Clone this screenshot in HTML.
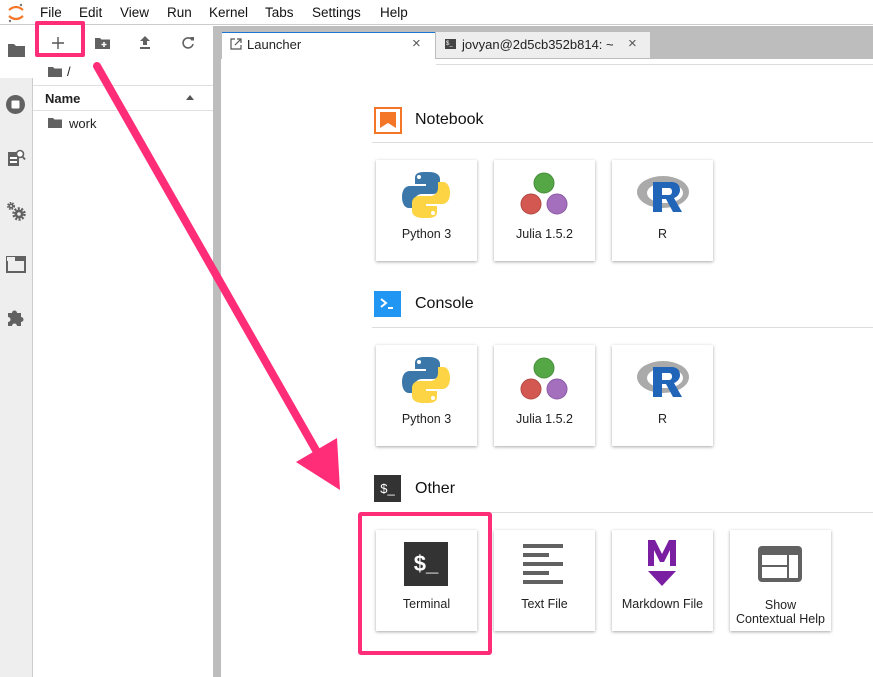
<!DOCTYPE html>
<html><head><meta charset="utf-8">
<style>
*{margin:0;padding:0;box-sizing:border-box}
body{width:873px;height:677px;overflow:hidden;background:#fff;font-family:"Liberation Sans",Arial,sans-serif;color:#222;position:relative}
.a{position:absolute}
.menu span{position:absolute;top:5px;font-size:13.5px;color:#111}
.card{position:absolute;width:101px;height:101px;background:#fff;box-shadow:0 1px 3px rgba(0,0,0,.35);}
.card .lbl{position:absolute;left:-5px;right:-5px;text-align:center;font-size:12.5px;color:#222;top:67px;line-height:14px}
.hdr{position:absolute;left:415px;font-size:16px;color:#111}
.line{position:absolute;left:372px;right:0;height:1px;background:#ddd}
</style></head><body>
<div class="a" style="left:0;top:0;width:873px;height:25px;background:#fff;border-bottom:1px solid #ccc"></div>
<svg class="a" style="left:6px;top:2px" width="20" height="22" viewBox="0 0 20 22"><path d="M3 8 Q10 2 17 8" stroke="#f37726" stroke-width="2.2" fill="none"/><path d="M3 14 Q10 20 17 14" stroke="#f37726" stroke-width="2.2" fill="none"/><circle cx="15" cy="3" r="1.2" fill="#767677"/><circle cx="4" cy="19" r="1.2" fill="#767677"/></svg>
<div class="menu"><span style="left:40px">File</span><span style="left:79px">Edit</span><span style="left:120px">View</span><span style="left:167px">Run</span><span style="left:209px">Kernel</span><span style="left:265px">Tabs</span><span style="left:312px">Settings</span><span style="left:380px">Help</span></div>
<div class="a" style="left:0;top:26px;width:33px;height:651px;background:#eee;border-right:1px solid #ccc"></div>
<div class="a" style="left:0;top:26px;width:33px;height:52px;background:#fff"></div>
<svg class="a" style="left:7px;top:42px" width="19" height="16" viewBox="0 0 19 16"><path d="M1 2h6l2 2h9v11H1z" fill="#616161"/></svg>
<svg class="a" style="left:5px;top:94px" width="21" height="21" viewBox="0 0 21 21"><circle cx="10.5" cy="10.5" r="9.5" fill="#616161"/><rect x="6.5" y="6.5" width="8" height="8" rx="1" fill="#fff"/></svg>
<svg class="a" style="left:6px;top:148px" width="20" height="20" viewBox="0 0 20 20"><rect x="2" y="4" width="11" height="14" fill="#616161"/><rect x="4" y="9" width="7" height="2" fill="#fff"/><rect x="4" y="13" width="7" height="2" fill="#fff"/><circle cx="14" cy="6" r="3.5" stroke="#616161" stroke-width="1.6" fill="#fff"/><path d="M16.5 8.5l2.5 3" stroke="#616161" stroke-width="1.8"/></svg>
<svg class="a" style="left:6px;top:201px" width="21" height="21" viewBox="0 0 21 21"><circle cx="5" cy="5" r="3" fill="none" stroke="#616161" stroke-width="2" stroke-dasharray="1.5 1"/><circle cx="5" cy="5" r="2.5" fill="#616161"/><circle cx="5" cy="5" r="1" fill="#eee"/><circle cx="13" cy="13" r="5.5" fill="none" stroke="#616161" stroke-width="2.5" stroke-dasharray="2 1.5"/><circle cx="13" cy="13" r="4.5" fill="#616161"/><circle cx="13" cy="13" r="1.8" fill="#eee"/></svg>
<svg class="a" style="left:6px;top:256px" width="20" height="17" viewBox="0 0 20 17"><rect x="1" y="1" width="18" height="15" fill="none" stroke="#616161" stroke-width="2"/><rect x="1" y="1" width="18" height="4" fill="#616161"/><rect x="1" y="1" width="8" height="4" fill="#eee"/></svg>
<svg class="a" style="left:6px;top:307px" width="20" height="20" viewBox="0 0 20 20"><path d="M2 6h4a2.5 2.5 0 1 1 5 0h4v4a2.5 2.5 0 1 1 0 5v4H11a2.5 2.5 0 1 0-5 0H2v-4a2.5 2.5 0 1 0 0-5z" fill="#616161"/></svg>
<div class="a" style="left:33px;top:26px;width:180px;height:651px;background:#fff"></div>
<svg class="a" style="left:52px;top:37px" width="12" height="12" viewBox="0 0 12 12"><path d="M6 0v12M0 6h12" stroke="#555" stroke-width="1.4"/></svg>
<svg class="a" style="left:95px;top:37px" width="15" height="12" viewBox="0 0 15 12"><path d="M0 1h5l1.5 1.5H15V12H0z" fill="#616161"/><path d="M9 5v5M6.5 7.5h5" stroke="#fff" stroke-width="1.5"/></svg>
<svg class="a" style="left:139px;top:36px" width="12" height="13" viewBox="0 0 12 13"><path d="M6 0L11 5H8v4H4V5H1z" fill="#616161"/><rect x="1" y="11" width="10" height="2" fill="#616161"/></svg>
<svg class="a" style="left:181px;top:36px" width="14" height="14" viewBox="0 0 14 14"><path d="M11.5 4.5A5 5 0 1 0 12 8" stroke="#616161" stroke-width="1.6" fill="none"/><path d="M9 1h4v4z" fill="#616161"/></svg>
<svg class="a" style="left:48px;top:66px" width="14" height="11" viewBox="0 0 14 11"><path d="M0 1h5l1.5 1.5H14V11H0z" fill="#616161"/></svg>
<div class="a" style="left:67px;top:64px;font-size:13px">/</div>
<div class="a" style="left:33px;top:85px;width:180px;height:1px;background:#e0e0e0"></div>
<div class="a" style="left:45px;top:91px;font-size:13px;font-weight:bold">Name</div>
<div class="a" style="left:186px;top:95px;width:0;height:0;border-left:4.5px solid transparent;border-right:4.5px solid transparent;border-bottom:5px solid #555"></div>
<div class="a" style="left:33px;top:110px;width:180px;height:1px;background:#e0e0e0"></div>
<svg class="a" style="left:48px;top:117px" width="14" height="11" viewBox="0 0 14 11"><path d="M0 1h5l1.5 1.5H14V11H0z" fill="#616161"/></svg>
<div class="a" style="left:69px;top:116px;font-size:13px">work</div>
<div class="a" style="left:213px;top:26px;width:8px;height:651px;background:#bdbdbd"></div>
<div class="a" style="left:221px;top:26px;width:652px;height:33px;background:#bdbdbd"></div>
<div class="a" style="left:222px;top:32px;width:213px;height:29px;background:#fff;border-top:1px solid #1976d2"></div>
<svg class="a" style="left:230px;top:38px" width="12" height="12" viewBox="0 0 12 12"><path d="M5 1H1v10h10V7" stroke="#555" stroke-width="1.2" fill="none"/><path d="M7 1h4v4M11 1L5 7" stroke="#555" stroke-width="1.2" fill="none"/></svg>
<div class="a" style="left:247px;top:37px;font-size:13px">Launcher</div>
<div class="a" style="left:412px;top:35px;font-size:15px;color:#555">×</div>
<div class="a" style="left:436px;top:32px;width:214px;height:26px;background:#eee"></div>
<div class="a" style="left:445px;top:39px;width:11px;height:10px;background:#444;color:#fff;font-size:6px;line-height:10px;padding-left:1px">$_</div>
<div class="a" style="left:462px;top:37px;font-size:13px">jovyan@2d5cb352b814: ~</div>
<div class="a" style="left:628px;top:35px;font-size:15px;color:#555">×</div>
<div class="a" style="left:436px;top:64px;width:437px;height:1px;background:#ddd"></div>
<svg class="a" style="left:374px;top:107px" width="28" height="27" viewBox="0 0 28 27"><rect x="1" y="1" width="26" height="25" fill="none" stroke="#f37726" stroke-width="2"/><path d="M6 5h16v16l-8-5-8 5z" fill="#f37726"/></svg>
<div class="hdr" style="top:111px">Notebook</div>
<div class="line" style="top:142px"></div>
<svg class="a" style="left:374px;top:291px" width="27" height="26" viewBox="0 0 27 26"><rect width="27" height="26" fill="#2196f3"/><path d="M7 8l5 4-5 4" stroke="#fff" stroke-width="2" fill="none"/><path d="M14 17h5" stroke="#fff" stroke-width="2"/></svg>
<div class="hdr" style="top:295px">Console</div>
<div class="line" style="top:327px"></div>
<div class="a" style="left:374px;top:475px;width:27px;height:27px;background:#333;color:#fff;font-size:13px;line-height:27px;text-align:center">$_</div>
<div class="hdr" style="top:480px">Other</div>
<div class="line" style="top:512px"></div>

<div class="card" style="left:376px;top:160px">
<svg class="a" style="left:25px;top:10px" width="50" height="50" viewBox="0 0 50 50"><path d="M24 2c-10 0-10 4-10 7v5h11v2H9c-5 0-8 4-8 11s3 11 7 11h5v-6c0-5 4-8 8-8h11c4 0 7-3 7-7V9c0-4-4-7-11-7z" fill="#3b77a8"/><circle cx="18" cy="7" r="2" fill="#fff"/><path d="M26 48c10 0 10-4 10-7v-5H25v-2h16c5 0 8-4 8-11s-3-11-7-11h-5v6c0 5-4 8-8 8H18c-4 0-7 3-7 7v8c0 4 4 7 11 7z" fill="#fdd444"/><circle cx="32" cy="43" r="2" fill="#fff"/></svg>
<div class="lbl">Python 3</div></div>
<div class="card" style="left:494px;top:160px">
<svg class="a" style="left:25px;top:11px" width="50" height="46" viewBox="0 0 50 46"><circle cx="25" cy="12" r="10" fill="#389826" opacity=".85" stroke="#2b7a1c"/><circle cx="12" cy="33" r="10" fill="#cb3c33" opacity=".85" stroke="#a52a22"/><circle cx="38" cy="33" r="10" fill="#9558b2" opacity=".85" stroke="#7a3e96"/></svg>
<div class="lbl">Julia 1.5.2</div></div>
<div class="card" style="left:612px;top:160px">
<svg class="a" style="left:24px;top:12px" width="54" height="44" viewBox="0 0 54 44"><ellipse cx="27" cy="20" rx="26" ry="16" fill="#aaa"/><ellipse cx="29" cy="21" rx="18" ry="10" fill="#fff"/><path d="M17 10h18c7 0 9 4 9 8s-3 7-6 8l8 14h-9l-7-13h-4v13h-9z M26 16v7h7c2 0 3-1.5 3-3.5S35 16 33 16z" fill="#2065b8" fill-rule="evenodd"/></svg>
<div class="lbl">R</div></div>
<div class="card" style="left:376px;top:345px">
<svg class="a" style="left:25px;top:10px" width="50" height="50" viewBox="0 0 50 50"><path d="M24 2c-10 0-10 4-10 7v5h11v2H9c-5 0-8 4-8 11s3 11 7 11h5v-6c0-5 4-8 8-8h11c4 0 7-3 7-7V9c0-4-4-7-11-7z" fill="#3b77a8"/><circle cx="18" cy="7" r="2" fill="#fff"/><path d="M26 48c10 0 10-4 10-7v-5H25v-2h16c5 0 8-4 8-11s-3-11-7-11h-5v6c0 5-4 8-8 8H18c-4 0-7 3-7 7v8c0 4 4 7 11 7z" fill="#fdd444"/><circle cx="32" cy="43" r="2" fill="#fff"/></svg>
<div class="lbl">Python 3</div></div>
<div class="card" style="left:494px;top:345px">
<svg class="a" style="left:25px;top:11px" width="50" height="46" viewBox="0 0 50 46"><circle cx="25" cy="12" r="10" fill="#389826" opacity=".85" stroke="#2b7a1c"/><circle cx="12" cy="33" r="10" fill="#cb3c33" opacity=".85" stroke="#a52a22"/><circle cx="38" cy="33" r="10" fill="#9558b2" opacity=".85" stroke="#7a3e96"/></svg>
<div class="lbl">Julia 1.5.2</div></div>
<div class="card" style="left:612px;top:345px">
<svg class="a" style="left:24px;top:12px" width="54" height="44" viewBox="0 0 54 44"><ellipse cx="27" cy="20" rx="26" ry="16" fill="#aaa"/><ellipse cx="29" cy="21" rx="18" ry="10" fill="#fff"/><path d="M17 10h18c7 0 9 4 9 8s-3 7-6 8l8 14h-9l-7-13h-4v13h-9z M26 16v7h7c2 0 3-1.5 3-3.5S35 16 33 16z" fill="#2065b8" fill-rule="evenodd"/></svg>
<div class="lbl">R</div></div>
<div class="card" style="left:376px;top:530px">
<div class="a" style="left:28px;top:12px;width:44px;height:44px;background:#333;color:#fff;font-size:22px;font-weight:bold;line-height:44px;text-align:center">$_</div>
<div class="lbl">Terminal</div></div>
<div class="card" style="left:494px;top:530px">
<svg class="a" style="left:29px;top:14px" width="40" height="42" viewBox="0 0 40 42"><g fill="#616161"><rect x="0" y="0" width="40" height="4"/><rect x="0" y="9" width="26" height="4"/><rect x="0" y="18" width="40" height="4"/><rect x="0" y="27" width="26" height="4"/><rect x="0" y="36" width="40" height="4"/></g></svg>
<div class="lbl">Text File</div></div>
<div class="card" style="left:612px;top:530px">
<svg class="a" style="left:34px;top:10px" width="32" height="47" viewBox="0 0 32 47"><path d="M2 0h7l7 14 7-14h7v26h-6V10l-6 12h-4L8 10v16H2z" fill="#7b1fa2"/><path d="M2 31h28L16 46z" fill="#7b1fa2"/></svg>
<div class="lbl">Markdown File</div></div>
<div class="card" style="left:730px;top:530px">
<svg class="a" style="left:28px;top:16px" width="44" height="36" viewBox="0 0 44 36"><rect width="44" height="36" rx="4" fill="#616161"/><rect x="4" y="9" width="25" height="10" fill="#fff"/><rect x="4" y="21" width="25" height="11" fill="#fff"/><rect x="31" y="9" width="9" height="23" fill="#fff"/></svg>
<div class="lbl" style="top:68px">Show<br>Contextual Help</div></div>

<div class="a" style="left:35px;top:21px;width:50px;height:36px;border:4px solid #ff2d78;border-radius:2px"></div>
<div class="a" style="left:358px;top:512px;width:134px;height:143px;border:4px solid #ff2d78;border-radius:3px"></div>
<svg class="a" style="left:0;top:0" width="873" height="677" viewBox="0 0 873 677"><line x1="97" y1="66" x2="317" y2="452" stroke="#ff2d78" stroke-width="8" stroke-linecap="round"/><path d="M296 462L337 438L340 490z" fill="#ff2d78"/></svg>
</body></html>
